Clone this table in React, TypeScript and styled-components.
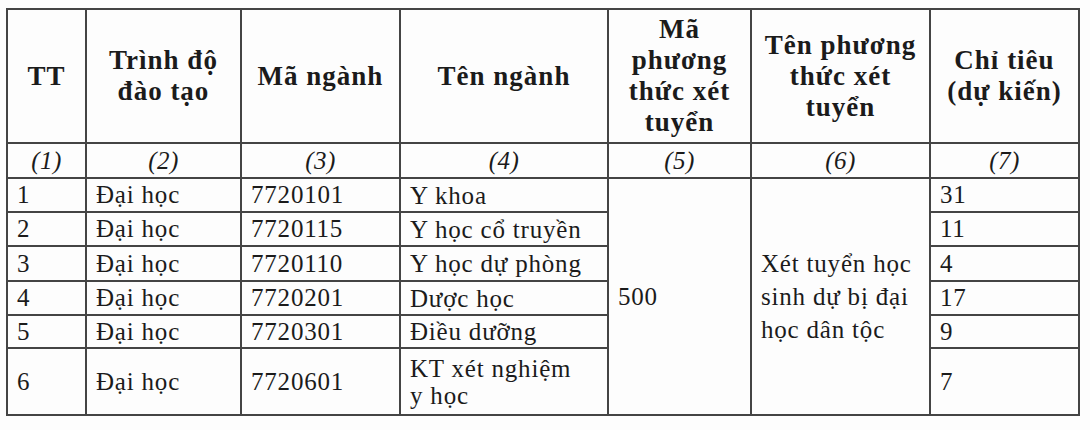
import React from 'react';
import styled, { createGlobalStyle } from 'styled-components';

const GlobalStyle = createGlobalStyle`
  body {
    margin: 0;
    background: #fdfdfd;
    font-family: "Liberation Serif", "Times New Roman", serif;
    color: #1b1b1b;
  }
`;

const Page = styled.div`
  padding: 8px 0 0 6px;
`;

const Sheet = styled.div`
  display: grid;
  grid-template-columns: 79px 155px 159px 208px 143px 179px 149px;
  grid-template-rows: 134px 35px 34px 34px 35px 34px 33px 67px;
  width: max-content;
  border-left: 2px solid #444;
  border-top: 2px solid #444;
`;

const CellBase = styled.div`
  box-sizing: border-box;
  display: flex;
  align-items: center;
  border-right: 2px solid #444;
  border-bottom: 2px solid #444;
  font-family: "Liberation Serif", "Times New Roman", serif;
`;

const HeadCell = styled(CellBase)`
  justify-content: center;
  padding: 0 2px;
  font-size: 27px;
  font-weight: 700;
  letter-spacing: 1px;
  line-height: 31px;
  text-align: center;
`;

const IndexCell = styled(CellBase)`
  justify-content: center;
  font-size: 25px;
  font-style: italic;
  letter-spacing: 0.5px;
`;

const Cell = styled(CellBase)<{ $rows?: number; $lineHeight?: number }>`
  grid-row: ${(p) => (p.$rows ? `span ${p.$rows}` : 'auto')};
  padding: 0 4px 0 9px;
  font-size: 25px;
  letter-spacing: 0.8px;
  line-height: ${(p) => p.$lineHeight ?? 28}px;
  white-space: nowrap;
`;

const headers: React.ReactNode[] = [
  'TT',
  <>Trình độ<br />đào tạo</>,
  'Mã ngành',
  'Tên ngành',
  <>Mã<br />phương<br />thức xét<br />tuyển</>,
  <>Tên phương<br />thức xét<br />tuyển</>,
  <>Chỉ tiêu<br />(dự kiến)</>,
];

interface Major {
  level: string;
  code: string;
  name: React.ReactNode;
  quota: number;
}

const majors: Major[] = [
  { level: 'Đại học', code: '7720101', name: 'Y khoa', quota: 31 },
  { level: 'Đại học', code: '7720115', name: 'Y học cổ truyền', quota: 11 },
  { level: 'Đại học', code: '7720110', name: 'Y học dự phòng', quota: 4 },
  { level: 'Đại học', code: '7720201', name: 'Dược học', quota: 17 },
  { level: 'Đại học', code: '7720301', name: 'Điều dưỡng', quota: 9 },
  { level: 'Đại học', code: '7720601', name: <>KT xét nghiệm<br />y học</>, quota: 7 },
];

export default function App() {
  return (
    <Page>
      <GlobalStyle />
      <Sheet>
        {headers.map((h, i) => (
          <HeadCell key={`h${i}`}>
            <span>{h}</span>
          </HeadCell>
        ))}
        {headers.map((_, i) => (
          <IndexCell key={`n${i}`}>({i + 1})</IndexCell>
        ))}
        {majors.map((m, i) => (
          <React.Fragment key={m.code}>
            <Cell>{i + 1}</Cell>
            <Cell>{m.level}</Cell>
            <Cell>{m.code}</Cell>
            <Cell $lineHeight={27}>
              <span>{m.name}</span>
            </Cell>
            {i === 0 && (
              <>
                <Cell $rows={majors.length}>500</Cell>
                <Cell $rows={majors.length} $lineHeight={33}>
                  <span>
                    Xét tuyển học
                    <br />
                    sinh dự bị đại
                    <br />
                    học dân tộc
                  </span>
                </Cell>
              </>
            )}
            <Cell>{m.quota}</Cell>
          </React.Fragment>
        ))}
      </Sheet>
    </Page>
  );
}
